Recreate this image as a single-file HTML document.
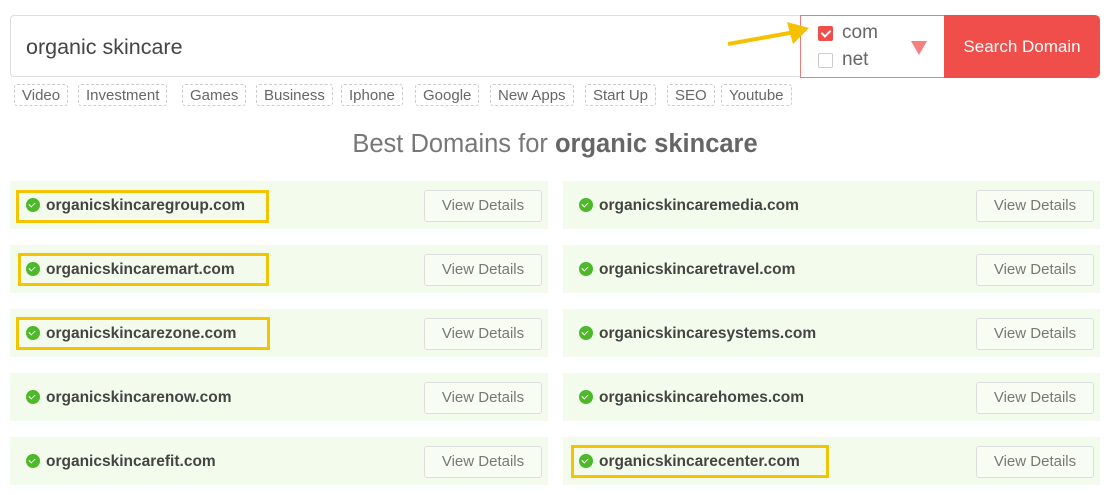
<!DOCTYPE html><html><head><style>
body{margin:0;width:1115px;height:495px;background:#fff;font-family:"Liberation Sans",sans-serif;position:relative;overflow:hidden;color:#555}
.a{position:absolute}
.search{left:10px;top:15px;width:790px;height:62px;border:1px solid #ddd;border-right:none;border-radius:4px 0 0 4px;box-sizing:border-box}
.q{left:26px;top:35px;font-size:21.5px;color:#444}
.dd{left:800px;top:15px;width:145px;height:63px;border:1px solid #f07a76;box-sizing:border-box}
.btn{left:944px;top:15px;width:156px;height:63px;background:#ef4e4a;border-radius:0 5px 5px 0;color:#fff;font-size:17px;line-height:63px;text-align:center}
.tag{position:absolute;top:84px;height:22px;border:1px dashed #ccc;border-radius:3px;font-size:15px;line-height:21px;padding:0 7px;box-sizing:border-box;color:#666}
.row{position:absolute;height:48px;background:#f3fcec;width:538px}
.dom{position:absolute;left:16px;top:1px;line-height:48px;font-weight:bold;font-size:15.5px;color:#444}
.dom i{display:inline-block;width:14px;height:14px;border-radius:50%;background:#4cb82a;vertical-align:-2px;margin-right:6px;position:relative}
.dom i:after{content:"";position:absolute;left:4px;top:3px;width:3px;height:5px;border:solid #fff;border-width:0 1.5px 1.5px 0;transform:rotate(45deg)}
.vd{position:absolute;right:6px;top:9px;width:118px;height:32px;border:1px solid #ddd;border-radius:3px;box-sizing:border-box;text-align:center;line-height:30px;font-size:15px;color:#777;background:#f7fdf3}
.hl{position:absolute;border:3px solid #f5c400;box-sizing:border-box}
</style></head><body>
<div class="a search"></div><div class="a q">organic skincare</div>
<div class="a dd">
 <div class="a" style="left:17px;top:10px;width:15px;height:15px;background:#ef4e4a;border-radius:2px"><div style="position:absolute;left:5px;top:2px;width:4px;height:7px;border:solid #fff;border-width:0 2px 2px 0;transform:rotate(45deg)"></div></div>
 <div class="a" style="left:41px;top:6px;font-size:19px;color:#666">com</div>
 <div class="a" style="left:17px;top:37px;width:15px;height:15px;border:1px solid #ccc;border-radius:2px;box-sizing:border-box"></div>
 <div class="a" style="left:41px;top:33px;font-size:19px;color:#666">net</div>
 <div class="a" style="left:110px;top:25px;width:0;height:0;border-left:8px solid transparent;border-right:8px solid transparent;border-top:14px solid #f58080"></div>
</div>
<div class="a btn">Search Domain</div>
<svg class="a" style="left:725px;top:22px" width="90" height="30"><line x1="3" y1="22" x2="70" y2="10" stroke="#f5c000" stroke-width="4"/><polygon points="62,0 84,6 68,22" fill="#f5c000"/></svg>
<div class="tag" style="left:14px">Video</div><div class="tag" style="left:78px">Investment</div><div class="tag" style="left:182px">Games</div><div class="tag" style="left:256px">Business</div><div class="tag" style="left:341px">Iphone</div><div class="tag" style="left:415px">Google</div><div class="tag" style="left:490px">New Apps</div><div class="tag" style="left:585px">Start Up</div><div class="tag" style="left:667px">SEO</div><div class="tag" style="left:721px">Youtube</div>
<div class="a" style="left:0;width:1110px;top:130px;text-align:center;font-size:25.5px;color:#777">Best Domains for <b style="color:#666">organic skincare</b></div>
<div class="row" style="left:10px;top:181px"><div class="dom"><i></i>organicskincaregroup.com</div><div class="vd">View Details</div></div>
<div class="row" style="left:10px;top:245px"><div class="dom"><i></i>organicskincaremart.com</div><div class="vd">View Details</div></div>
<div class="row" style="left:10px;top:309px"><div class="dom"><i></i>organicskincarezone.com</div><div class="vd">View Details</div></div>
<div class="row" style="left:10px;top:373px"><div class="dom"><i></i>organicskincarenow.com</div><div class="vd">View Details</div></div>
<div class="row" style="left:10px;top:437px"><div class="dom"><i></i>organicskincarefit.com</div><div class="vd">View Details</div></div>
<div class="row" style="left:563px;top:181px;width:537px"><div class="dom"><i></i>organicskincaremedia.com</div><div class="vd">View Details</div></div>
<div class="row" style="left:563px;top:245px;width:537px"><div class="dom"><i></i>organicskincaretravel.com</div><div class="vd">View Details</div></div>
<div class="row" style="left:563px;top:309px;width:537px"><div class="dom"><i></i>organicskincaresystems.com</div><div class="vd">View Details</div></div>
<div class="row" style="left:563px;top:373px;width:537px"><div class="dom"><i></i>organicskincarehomes.com</div><div class="vd">View Details</div></div>
<div class="row" style="left:563px;top:437px;width:537px"><div class="dom"><i></i>organicskincarecenter.com</div><div class="vd">View Details</div></div>
<div class="hl" style="left:16px;top:190px;width:253px;height:33px"></div>
<div class="hl" style="left:18px;top:253px;width:251px;height:33px"></div>
<div class="hl" style="left:16px;top:317px;width:254px;height:33px"></div>
<div class="hl" style="left:571px;top:445px;width:258px;height:33px"></div>
</body></html>
